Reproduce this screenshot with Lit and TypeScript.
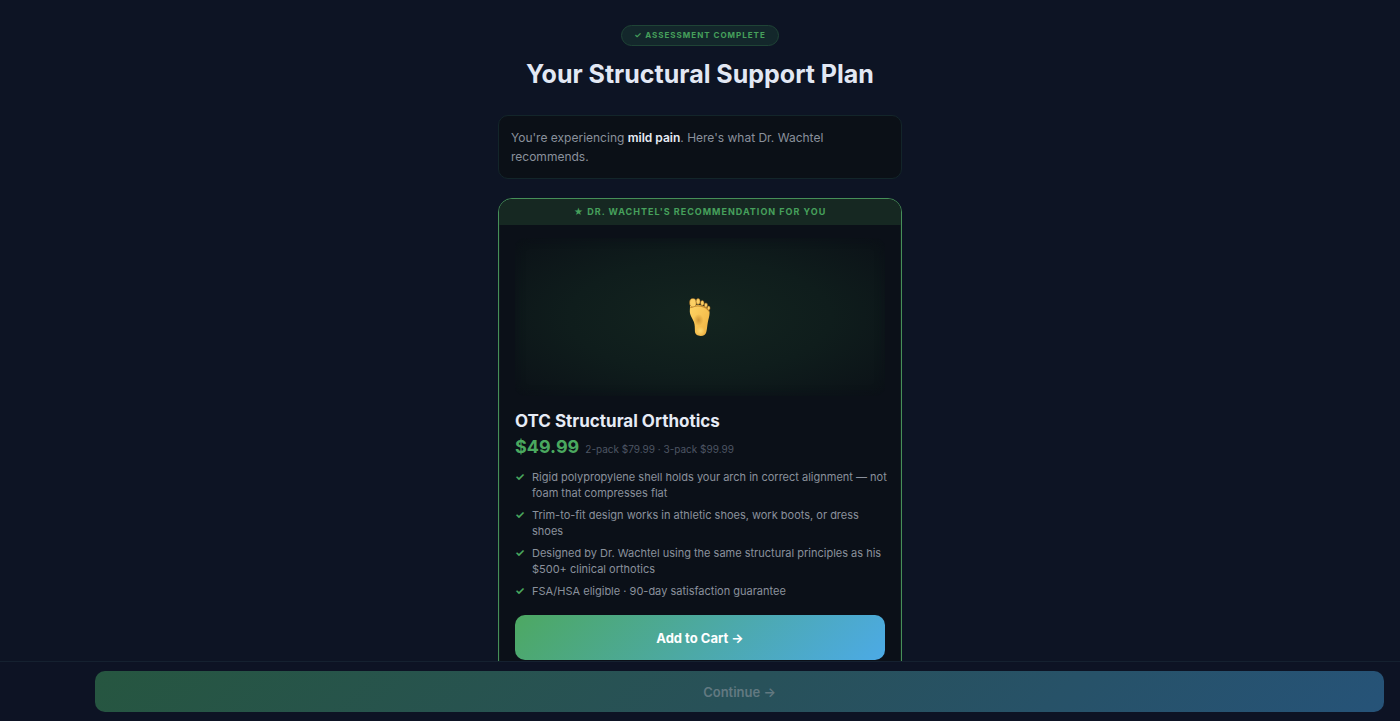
import { LitElement, html, css, svg } from "lit";
import { customElement, property } from "lit/decorators.js";

const foot = svg`
  <defs>
    <linearGradient id="skin" x1="0" y1="0" x2="1" y2="1">
      <stop offset="0" stop-color="#ffd565"></stop>
      <stop offset="0.55" stop-color="#f6c151"></stop>
      <stop offset="1" stop-color="#ebae40"></stop>
    </linearGradient>
    <radialGradient id="arch" cx="0.5" cy="0.5" r="0.5">
      <stop offset="0" stop-color="#b87a22" stop-opacity="0.6"></stop>
      <stop offset="1" stop-color="#b87a22" stop-opacity="0"></stop>
    </radialGradient>
    <radialGradient id="heel" cx="0.5" cy="0.5" r="0.5">
      <stop offset="0" stop-color="#ffe07a" stop-opacity="0.8"></stop>
      <stop offset="1" stop-color="#ffe07a" stop-opacity="0"></stop>
    </radialGradient>
  </defs>
  <path d="M1 8C4 6.600 8 6.400 12 7.200c4.800 1 8.600 3.400 8.600 7.600 0 3.300-1.300 6.400-1.900 10.100-.5 3-.6 6-1.400 9-.7 2.600-2.500 4-5.600 4-3.200 0-5.700-1.400-5.800-4.600-.1-3.300 .1-6.400-1-9.400C3.700 20.500 1 18 .8 13.500z" fill="url(#skin)"></path>
  <path d="M1.300 9.800C4.500 7.900 8.500 7.500 12 8.200c3.600 .7 6.700 2.500 8.200 5.200" fill="none" stroke="#a96c1c" stroke-width="1.200" opacity=".65"></path>
  <ellipse cx="9.500" cy="22" rx="5" ry="6" fill="url(#arch)"></ellipse>
  <ellipse cx="11.500" cy="33" rx="4.500" ry="4.500" fill="url(#heel)"></ellipse>
  <g fill="#fcd064" stroke="#9a611a" stroke-width=".5">
    <ellipse cx="3.900" cy="4.700" rx="3.300" ry="4.200"></ellipse>
    <ellipse cx="9.100" cy="3.400" rx="2" ry="2.900"></ellipse>
    <ellipse cx="13.300" cy="4.900" rx="1.800" ry="2.500"></ellipse>
    <ellipse cx="16.900" cy="7.100" rx="1.600" ry="2.200"></ellipse>
    <ellipse cx="19.700" cy="10.100" rx="1.400" ry="2"></ellipse>
  </g>`;

@customElement("product-card")
export class ProductCard extends LitElement {
  @property() name = "";
  @property() price = "";
  @property() packs = "";
  @property({ attribute: false }) features: string[] = [];

  static styles = css`
    :host {
      display: block;
      border: 1px solid #468f58;
      border-radius: 14px;
      box-shadow: inset 0 0 1px #468f58;
      background: #0b1018;
      overflow: hidden;
    }
    .ribbon {
      padding: 6px 16px;
      background: #162822;
      color: #46a05c;
      text-align: center;
      font-size: 9px;
      line-height: 14px;
      font-weight: 700;
      letter-spacing: 1px;
      text-transform: uppercase;
    }
    .body {
      padding: 13px 16px 20px;
    }
    .photo {
      display: grid;
      place-items: center;
      height: 158px;
      border-radius: 10px;
      background: radial-gradient(ellipse at center, #13241f 0%, #0f1d1c 50%, #0b1117 100%);
      box-shadow: inset 0 0 10px #0b1018;
    }
    .name {
      margin: 12px 0 0;
      color: #e6ebf5;
      font-size: 17px;
      line-height: 26px;
      font-weight: 700;
    }
    .prices {
      display: flex;
      align-items: baseline;
      gap: 6px;
      margin: 0;
      line-height: 26px;
    }
    .price {
      color: #4aa85f;
      font-size: 18px;
      font-weight: 700;
    }
    .packs {
      color: #4d5563;
      font-size: 10px;
    }
    .features {
      display: grid;
      gap: 6px;
      margin: 7px -4px 16px 0;
      padding: 0;
      list-style: none;
      color: #8a909c;
      font-size: 11px;
      line-height: 16px;
    }
    .feature {
      display: flex;
      gap: 7px;
    }
    .tick {
      flex: 0 0 10px;
      color: #4aa85f;
      font-weight: 700;
    }
    .cart {
      display: block;
      width: 100%;
      height: 45px;
      border: 0;
      border-radius: 10px;
      background: linear-gradient(135deg, #4da862, #4caae6);
      color: #fff;
      font: 700 13px/20px Inter, sans-serif;
      cursor: pointer;
    }
  `;

  render() {
    return html`
      <div class="ribbon">★ ${"Dr. Wachtel's recommendation for you"}</div>
      <div class="body">
        <div class="photo">
          <svg width="22" height="38" viewBox="0 0 22 38" role="img" aria-label="Foot">${foot}</svg>
        </div>
        <h2 class="name">${this.name}</h2>
        <p class="prices">
          <span class="price">${this.price}</span>
          <span class="packs">${this.packs}</span>
        </p>
        <ul class="features">
          ${this.features.map(
            (f) => html`<li class="feature"><span class="tick">✓</span><span>${f}</span></li>`
          )}
        </ul>
        <button class="cart" type="button">Add to Cart →</button>
      </div>
    `;
  }
}

@customElement("app-root")
export class AppRoot extends LitElement {
  static styles = css`
    :host {
      display: flex;
      flex-direction: column;
      height: 100vh;
      background: #0d1424;
      font-family: Inter, sans-serif;
    }
    .scroll {
      flex: 1;
      min-height: 0;
      overflow-y: auto;
      scrollbar-width: none;
    }
    .column {
      box-sizing: border-box;
      max-width: 436px;
      margin: 0 auto;
      padding: 25px 16px 24px;
    }
    .intro {
      text-align: center;
    }
    .badge {
      display: inline-block;
      padding: 3px 12px;
      border: 1px solid #1f4436;
      border-radius: 11px;
      background: #13272b;
      color: #46a05c;
      font-size: 8px;
      line-height: 13px;
      font-weight: 700;
      letter-spacing: 1px;
      text-transform: uppercase;
      vertical-align: top;
    }
    .title {
      margin: 11px 0 23px;
      color: #e2e8f4;
      font-size: 25px;
      line-height: 35px;
      font-weight: 700;
    }
    .summary {
      margin: 0 0 19px;
      padding: 12px;
      border: 1px solid #13252a;
      border-radius: 10px;
      background: #0b1017;
      color: #8a909c;
      font-size: 12px;
      line-height: 19px;
    }
    .strong {
      color: #e6ebf5;
      font-weight: 600;
    }
    .bar {
      display: flex;
      padding: 9px 16px 9px 95px;
      border-top: 1px solid #152130;
      background: #0d1324;
    }
    .next {
      flex: 1;
      height: 41px;
      border: 0;
      border-radius: 10px;
      background: linear-gradient(135deg, #265640, #285159 50%, #265378);
      color: #627981;
      font: 600 13px/20px Inter, sans-serif;
    }
  `;

  private features = [
    "Rigid polypropylene shell holds your arch in correct alignment — not foam that compresses flat",
    "Trim-to-fit design works in athletic shoes, work boots, or dress shoes",
    "Designed by Dr. Wachtel using the same structural principles as his $500+ clinical orthotics",
    "FSA/HSA eligible · 90-day satisfaction guarantee",
  ];

  render() {
    return html`
      <main class="scroll">
        <div class="column">
          <header class="intro">
            <span class="badge">✓ Assessment complete</span>
            <h1 class="title">Your Structural Support Plan</h1>
          </header>
          <p class="summary">
            You're experiencing <strong class="strong">mild pain</strong>. Here's what Dr. Wachtel
            recommends.
          </p>
          <product-card
            name="OTC Structural Orthotics"
            price="$49.99"
            packs="2-pack $79.99 · 3-pack $99.99"
            .features=${this.features}
          ></product-card>
        </div>
      </main>
      <footer class="bar">
        <button class="next" type="button" disabled>Continue →</button>
      </footer>
    `;
  }
}
